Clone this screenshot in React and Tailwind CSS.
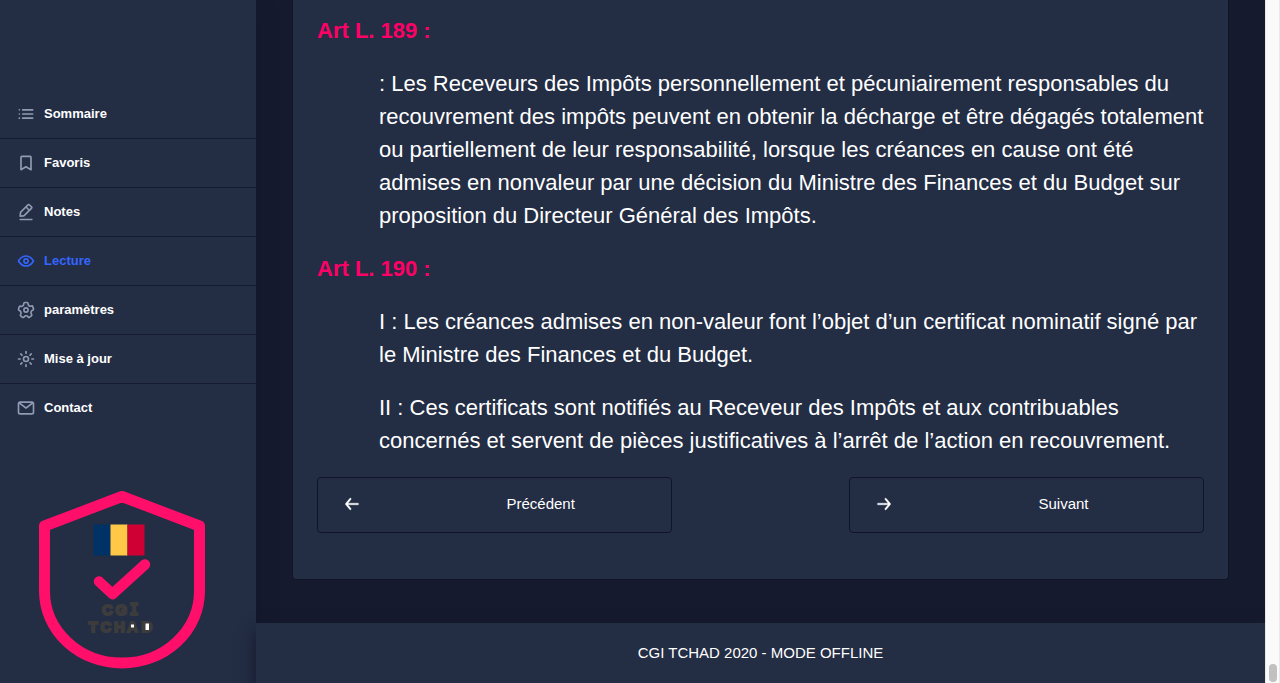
const MENU = [
  { label: 'Sommaire', icon: 'list' },
  { label: 'Favoris', icon: 'bookmark' },
  { label: 'Notes', icon: 'edit' },
  { label: 'Lecture', icon: 'eye', active: true },
  { label: 'paramètres', icon: 'settings' },
  { label: 'Mise à jour', icon: 'sun' },
  { label: 'Contact', icon: 'email' },
];

const ICONS = {
  list: (
    <>
      <circle cx="4" cy="7" r="1" />
      <circle cx="4" cy="12" r="1" />
      <circle cx="4" cy="17" r="1" />
      <rect x="7" y="11" width="14" height="2" rx=".94" />
      <rect x="7" y="16" width="14" height="2" rx=".94" />
      <rect x="7" y="6" width="14" height="2" rx=".94" />
    </>
  ),
  bookmark: (
    <path
      d="M6 20V5.33A1.27 1.27 0 0 1 7.2 4h9.6A1.27 1.27 0 0 1 18 5.33V20l-6.1-3.5z"
      fill="none"
      stroke="currentColor"
      strokeWidth="2"
      strokeLinejoin="round"
    />
  ),
  edit: (
    <>
      <path d="M19 20H5a1 1 0 0 0 0 2h14a1 1 0 0 0 0-2z" />
      <path d="M5 18h.09l4.17-.38a2 2 0 0 0 1.21-.57l9-9a1.92 1.92 0 0 0-.07-2.71L16.66 2.6A2 2 0 0 0 14 2.53l-9 9a2 2 0 0 0-.57 1.21L4 16.91a1 1 0 0 0 .29.8A1 1 0 0 0 5 18zM15.27 4L18 6.73l-2 1.95L13.32 6zm-8.9 8.91L12 7.32l2.7 2.7-5.6 5.6-3 .28z" />
    </>
  ),
  eye: (
    <>
      <path d="M21.87 11.5c-.64-1.11-4.16-6.68-10.14-6.5-5.53.14-8.73 5-9.6 6.5a1 1 0 0 0 0 1c.63 1.09 4 6.5 9.89 6.5h.25c5.53-.14 8.74-5 9.6-6.5a1 1 0 0 0 0-1zM12.22 17c-4.31.1-7.12-3.59-8-5 1-1.61 3.61-4.9 7.61-5 4.29-.11 7.11 3.59 8 5-1.03 1.61-3.61 4.9-7.61 5z" />
      <path d="M12 8.5a3.5 3.5 0 1 0 3.5 3.5A3.5 3.5 0 0 0 12 8.5zm0 5a1.5 1.5 0 1 1 1.5-1.5 1.5 1.5 0 0 1-1.5 1.5z" />
    </>
  ),
  settings: (
    <>
      <path d="M8.61 22a2.25 2.25 0 0 1-1.35-.46L5.19 20a2.37 2.37 0 0 1-.49-3.22 2.06 2.06 0 0 0 .23-1.86l-.06-.16a1.83 1.83 0 0 0-1.12-1.22h-.16a2.34 2.34 0 0 1-1.48-2.94L2.93 8a2.18 2.18 0 0 1 1.12-1.41 2.14 2.14 0 0 1 1.68-.12 1.93 1.93 0 0 0 1.78-.29l.13-.1a1.94 1.94 0 0 0 .73-1.51v-.24A2.32 2.32 0 0 1 10.66 2h2.55a2.26 2.26 0 0 1 1.6.67 2.37 2.37 0 0 1 .68 1.68v.28a1.76 1.76 0 0 0 .69 1.43l.11.08a1.74 1.74 0 0 0 1.59.26l.34-.11A2.26 2.26 0 0 1 21.1 7.8l.79 2.52a2.36 2.36 0 0 1-1.46 2.93l-.2.07A1.89 1.89 0 0 0 19 14.6a2 2 0 0 0 .25 1.65l.26.38a2.38 2.38 0 0 1-.5 3.23L17 21.41a2.24 2.24 0 0 1-3.22-.53l-.12-.17a1.75 1.75 0 0 0-1.5-.78 1.8 1.8 0 0 0-1.43.77l-.23.33A2.25 2.25 0 0 1 9 22a2 2 0 0 1-.39 0zM4.4 11.62a3.83 3.83 0 0 1 2.38 2.5v.12a4 4 0 0 1-.46 3.62.38.38 0 0 0 0 .51L8.47 20a.25.25 0 0 0 .37-.07l.23-.33a3.77 3.77 0 0 1 6.2 0l.12.18a.3.3 0 0 0 .18.12.25.25 0 0 0 .19-.05l2.06-1.56a.36.36 0 0 0 .07-.49l-.26-.38A4 4 0 0 1 17.1 14a3.92 3.92 0 0 1 2.49-2.61l.2-.07a.34.34 0 0 0 .19-.44l-.78-2.49a.35.35 0 0 0-.2-.19.21.21 0 0 0-.19 0l-.34.11a3.74 3.74 0 0 1-3.43-.57L15 7.65a3.76 3.76 0 0 1-1.49-3v-.31a.37.37 0 0 0-.1-.26.31.31 0 0 0-.21-.08h-2.54a.31.31 0 0 0-.29.33v.25a3.9 3.9 0 0 1-1.52 3.09l-.13.1a3.91 3.91 0 0 1-3.63.59.22.22 0 0 0-.14 0 .28.28 0 0 0-.12.15L4 11.12a.36.36 0 0 0 .22.45z" />
      <path d="M12 15.5a3.5 3.5 0 1 1 3.5-3.5 3.5 3.5 0 0 1-3.5 3.5zm0-5a1.5 1.5 0 1 0 1.5 1.5 1.5 1.5 0 0 0-1.5-1.5z" />
    </>
  ),
  sun: (
    <g fill="none" stroke="currentColor" strokeWidth="2" strokeLinecap="round">
      <circle cx="12" cy="12" r="3" />
      <path d="M12 3v2M12 19v2M3 12h2M19 12h2M5.7 5.95l1.44 1.39M16.86 16.66l1.44 1.39M18.3 5.95l-1.44 1.39M7.14 16.66L5.7 18.05" />
    </g>
  ),
  email: (
    <path d="M19 4H5a3 3 0 0 0-3 3v10a3 3 0 0 0 3 3h14a3 3 0 0 0 3-3V7a3 3 0 0 0-3-3zm-.67 2L12 10.75 5.67 6zM19 18H5a1 1 0 0 1-1-1V7.25l7.4 5.55a1 1 0 0 0 .6.2 1 1 0 0 0 .6-.2L20 7.25V17a1 1 0 0 1-1 1z" />
  ),
  back: (
    <path d="M19 11H7.14l3.63-4.36a1 1 0 1 0-1.54-1.28l-5 6a1.19 1.19 0 0 0-.09.15c0 .05 0 .08-.07.13A1 1 0 0 0 4 12a1 1 0 0 0 .07.36c0 .05 0 .08.07.13a1.19 1.19 0 0 0 .09.15l5 6A1 1 0 0 0 10 19a1 1 0 0 0 .64-.23 1 1 0 0 0 .13-1.41L7.14 13H19a1 1 0 0 0 0-2z" />
  ),
  forward: (
    <path d="M5 13h11.86l-3.63 4.36a1 1 0 0 0 1.54 1.28l5-6a1.19 1.19 0 0 0 .09-.15c0-.05.05-.08.07-.13A1 1 0 0 0 20 12a1 1 0 0 0-.07-.36c0-.05-.05-.08-.07-.13a1.19 1.19 0 0 0-.09-.15l-5-6A1 1 0 0 0 14 5a1 1 0 0 0-.64.23 1 1 0 0 0-.13 1.41L16.86 11H5a1 1 0 0 0 0 2z" />
  ),
};

function Icon({ name, className }) {
  return (
    <svg viewBox="0 0 24 24" fill="currentColor" className={className}>
      {ICONS[name]}
    </svg>
  );
}

function Logo() {
  return (
    <svg viewBox="0 0 180 190" className="ml-8 block h-[190px] w-[180px]">
      <path
        d="M90 11.5 167.5 41V106a77.5 72 0 0 1-155 0V41z"
        fill="none"
        stroke="#ff0f69"
        strokeWidth="11"
        strokeLinejoin="round"
      />
      <rect x="61.5" y="39.5" width="17" height="31" fill="#003266" />
      <rect x="78.5" y="39.5" width="17" height="31" fill="#ffc846" />
      <rect x="95.5" y="39.5" width="17" height="31" fill="#ce0034" />
      <path
        d="M67 96.5 80.5 109 113 79.5"
        fill="none"
        stroke="#ff0f69"
        strokeWidth="10.5"
        strokeLinecap="round"
        strokeLinejoin="round"
      />
      <g
        fill="#3c3c3c"
        stroke="#3c3c3c"
        strokeWidth="2"
        className="font-['Liberation_Sans',Arial,sans-serif] text-[15px] font-bold"
      >
        <text x="70 83.5" y="130">CG</text>
        <text x="97.5" y="130" className="font-['DejaVu_Sans_Mono',monospace]">I</text>
        <text x="56.5 68.5 82 95 109.500" y="147">TCHAD</text>
      </g>
      <rect x="99" y="139.5" width="3" height="3" fill="#fff" />
      <rect x="113.5" y="138.5" width="3.5" height="6.5" fill="#fff" />
    </svg>
  );
}

function NavButton({ icon, label }) {
  return (
    <button className="flex h-14 w-[355px] items-center rounded border border-[#101426] pl-6 text-[15px] text-white">
      <Icon name={icon} className="-mt-0.5 h-5 w-5 stroke-current stroke-[0.4]" />
      <span className="ml-[144.5px] pb-1">{label}</span>
    </button>
  );
}

export default function App() {
  return (
    <div className="flex h-[683px] w-[1280px] overflow-hidden bg-[#151a2e] font-['Liberation_Sans',Arial,sans-serif] text-white">
      <aside className="flex w-64 shrink-0 flex-col justify-between bg-[#232d44] pt-[90px] shadow-[0_8px_16px_0_#13182a]">
        <nav>
          {MENU.map((item, i) => (
            <a
              key={item.label}
              className={
                'flex items-center px-4 text-[13px] font-bold ' +
                (i < MENU.length - 1 ? 'h-[49px] border-b border-[#151a2e] ' : 'h-12 ') +
                (item.active ? 'text-[#3366ff]' : 'text-white')
              }
            >
              <Icon
                name={item.icon}
                className={'mr-2 h-5 w-5 ' + (item.active ? 'text-[#3366ff]' : 'text-[#8f9bb3]')}
              />
              <span>{item.label}</span>
            </a>
          ))}
        </nav>
        <div className="pb-[8px]">
          <Logo />
        </div>
      </aside>

      <div className="flex w-[1009px] shrink-0 flex-col">
        <main className="h-[623px] px-9">
          <article className="h-[580px] w-[937px] rounded-b border border-t-0 border-[#101426] bg-[#232d44] px-6 pt-[14px] text-[22px] leading-[33px]">
            <h2 className="font-bold text-[#ff0066]">Art L. 189 :</h2>
            <p className="mt-5 whitespace-nowrap pl-[62px]">
              : Les Receveurs des Impôts personnellement et pécuniairement responsables du
              <br />
              recouvrement des impôts peuvent en obtenir la décharge et être dégagés totalement
              <br />
              ou partiellement de leur responsabilité, lorsque les créances en cause ont été
              <br />
              admises en nonvaleur par une décision du Ministre des Finances et du Budget sur
              <br />
              proposition du Directeur Général des Impôts.
            </p>
            <h2 className="mt-5 font-bold text-[#ff0066]">Art L. 190 :</h2>
            <p className="mt-5 whitespace-nowrap pl-[62px]">
              I : Les créances admises en non-valeur font l’objet d’un certificat nominatif signé par
              <br />
              le Ministre des Finances et du Budget.
            </p>
            <p className="mt-5 whitespace-nowrap pl-[62px]">
              II : Ces certificats sont notifiés au Receveur des Impôts et aux contribuables
              <br />
              concernés et servent de pièces justificatives à l’arrêt de l’action en recouvrement.
            </p>
            <div className="mt-5 flex justify-between">
              <NavButton icon="back" label="Précédent" />
              <NavButton icon="forward" label="Suivant" />
            </div>
          </article>
        </main>
        <footer className="flex h-[60px] items-center justify-center bg-[#232d44] text-[15px] shadow-[0_8px_16px_0_#13182a]">
          CGI TCHAD 2020 - MODE OFFLINE
        </footer>
      </div>

      <div className="flex w-[15px] shrink-0 items-end justify-center border-x border-[#e8e8e8] bg-[#fafafa] pb-px">
        <div className="h-[18px] w-2 rounded-full bg-[#c1c1c1]" />
      </div>
    </div>
  );
}
